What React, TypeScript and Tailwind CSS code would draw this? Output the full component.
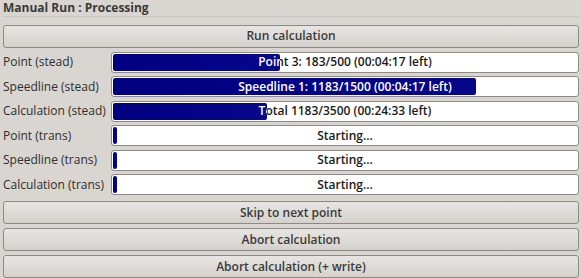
const rows = [
  { label: "Point (stead)", text: "Point 3: 183/500 (00:04:17 left)", pct: 35.8 },
  { label: "Speedline (stead)", text: "Speedline 1: 1183/1500 (00:04:17 left)", pct: 77.8 },
  { label: "Calculation (stead)", text: "Total 1183/3500 (00:24:33 left)", pct: 33 },
  { label: "Point (trans)", text: "Starting...", pct: 0.9 },
  { label: "Speedline (trans)", text: "Starting...", pct: 0.9 },
  { label: "Calculation (trans)", text: "Starting...", pct: 0.9 },
];

function Button({ children }: { children: React.ReactNode }) {
  return (
    <button className="h-[23px] w-full rounded-[3px] border border-[#8d8a85] bg-gradient-to-b from-[#e7e5e2] to-[#d5d2cd] text-[12px] font-semibold text-[#3a3a3a] leading-none">
      {children}
    </button>
  );
}

function Bar({ text, pct }: { text: string; pct: number }) {
  return (
    <div className="relative h-[21px] overflow-hidden rounded-[3px] border border-[#8e8b87] bg-white">
      <div className="flex h-full items-center justify-center text-[12px] font-semibold text-[#1a1a1a]">
        {text}
      </div>
      {/* filled part repeats the label in white, clipped to the fill width */}
      <div
        className="absolute inset-y-[1px] left-[1px] overflow-hidden rounded-[2px] bg-gradient-to-r from-[#000080] to-[#07078a]"
        style={{ width: `${pct}%` }}
      >
        <div className="flex h-full w-[464px] items-center justify-center text-[12px] font-semibold text-white">
          {text}
        </div>
      </div>
    </div>
  );
}

export default function App() {
  return (
    <div
      className="h-[278px] w-[582px] overflow-hidden bg-[#d9d5d0] px-[3px]"
      style={{ fontFamily: '"Open Sans", sans-serif' }}
    >
      <div className="h-[17px] border-b border-[#c9c5c0] text-[12px] font-bold leading-[16px] text-[#3a3a3a]">
        Manual Run : Processing
      </div>
      <div className="mt-[5px]">
        <Button>Run calculation</Button>
      </div>
      <div className="mt-[4px] grid grid-cols-[108px_1fr] gap-y-[3.5px]">
        {rows.map((r) => (
          <div key={r.label} className="contents">
            <div className="flex items-center text-[12px] text-[#2e2e2e]">{r.label}</div>
            <Bar text={r.text} pct={r.pct} />
          </div>
        ))}
      </div>
      <div className="mt-[6px] flex flex-col gap-[4px]">
        <Button>Skip to next point</Button>
        <Button>Abort calculation</Button>
        <Button>Abort calculation (+ write)</Button>
      </div>
    </div>
  );
}
